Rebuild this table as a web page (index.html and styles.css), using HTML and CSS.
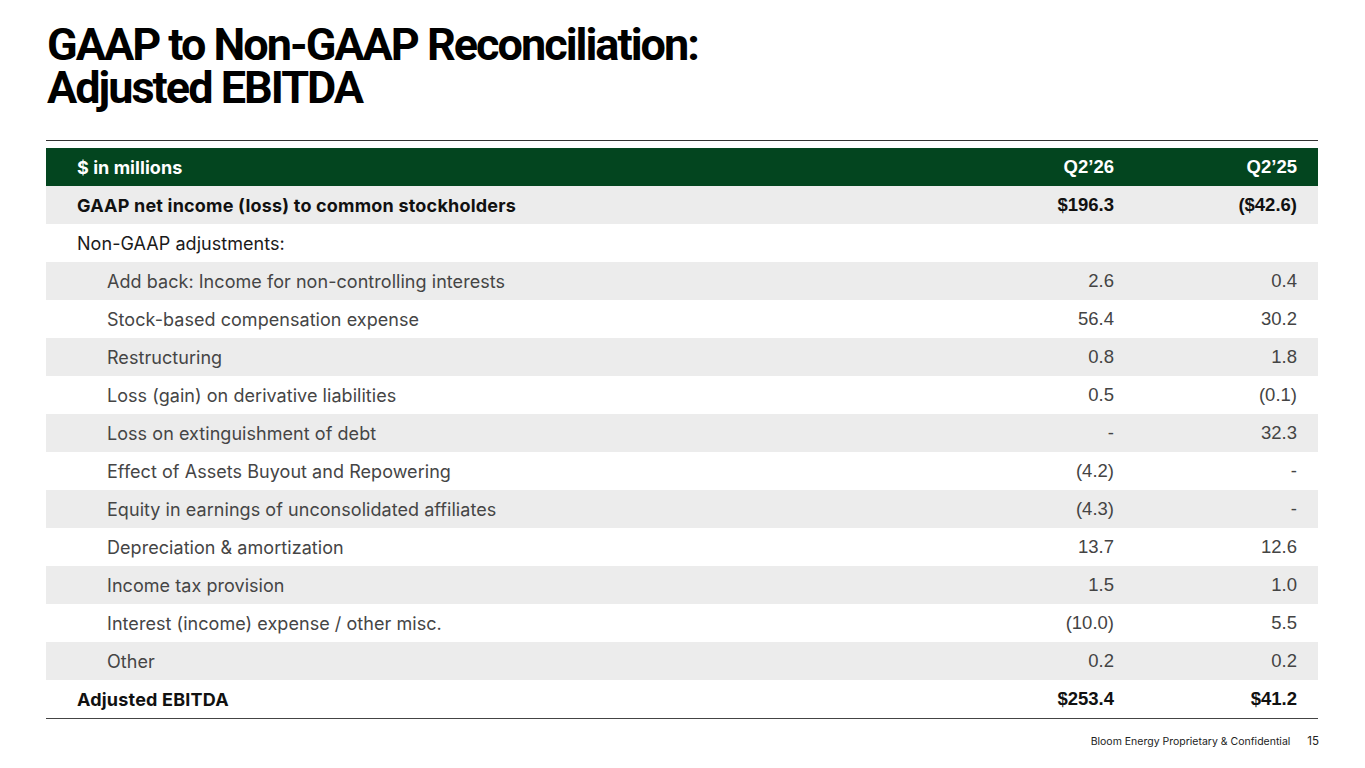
FILE: index.html
```html
<!DOCTYPE html>
<html lang="en">
<head>
<meta charset="utf-8">
<title>GAAP to Non-GAAP Reconciliation: Adjusted EBITDA</title>
<link rel="stylesheet" href="styles.css">
</head>
<body>
<div class="slide">
  <h1 class="title"><span class="tline">GAAP to Non-GAAP Reconciliation:</span><span class="tline">Adjusted EBITDA</span></h1>
  <div class="table-wrap">
    <div class="table">
      <div class="row head">
        <div class="label">$ in millions</div>
        <div class="num">Q2’26</div>
        <div class="num">Q2’25</div>
      </div>
      <div class="row shade strong">
        <div class="label">GAAP net income (loss) to common stockholders</div>
        <div class="num">$196.3</div>
        <div class="num">($42.6)</div>
      </div>
      <div class="row section">
        <div class="label">Non-GAAP adjustments:</div>
        <div class="num"></div>
        <div class="num"></div>
      </div>
      <div class="row shade">
        <div class="label indent">Add back: Income for non-controlling interests</div>
        <div class="num">2.6</div>
        <div class="num">0.4</div>
      </div>
      <div class="row">
        <div class="label indent">Stock-based compensation expense</div>
        <div class="num">56.4</div>
        <div class="num">30.2</div>
      </div>
      <div class="row shade">
        <div class="label indent">Restructuring</div>
        <div class="num">0.8</div>
        <div class="num">1.8</div>
      </div>
      <div class="row">
        <div class="label indent">Loss (gain) on derivative liabilities</div>
        <div class="num">0.5</div>
        <div class="num">(0.1)</div>
      </div>
      <div class="row shade">
        <div class="label indent">Loss on extinguishment of debt</div>
        <div class="num">-</div>
        <div class="num">32.3</div>
      </div>
      <div class="row">
        <div class="label indent">Effect of Assets Buyout and Repowering</div>
        <div class="num">(4.2)</div>
        <div class="num">-</div>
      </div>
      <div class="row shade">
        <div class="label indent">Equity in earnings of unconsolidated affiliates</div>
        <div class="num">(4.3)</div>
        <div class="num">-</div>
      </div>
      <div class="row">
        <div class="label indent">Depreciation &amp; amortization</div>
        <div class="num">13.7</div>
        <div class="num">12.6</div>
      </div>
      <div class="row shade">
        <div class="label indent">Income tax provision</div>
        <div class="num">1.5</div>
        <div class="num">1.0</div>
      </div>
      <div class="row">
        <div class="label indent">Interest (income) expense / other misc.</div>
        <div class="num">(10.0)</div>
        <div class="num">5.5</div>
      </div>
      <div class="row shade">
        <div class="label indent">Other</div>
        <div class="num">0.2</div>
        <div class="num">0.2</div>
      </div>
      <div class="row strong total">
        <div class="label">Adjusted EBITDA</div>
        <div class="num">$253.4</div>
        <div class="num">$41.2</div>
      </div>
    </div>
  </div>
  <div class="footer">
    <span class="conf">Bloom Energy Proprietary &amp; Confidential</span>
    <span class="page">15</span>
  </div>
</div>
</body>
</html>
```
FILE: styles.css
```css
html, body {
  margin: 0;
  padding: 0;
  background: #ffffff;
}
.slide {
  width: 1365px;
  height: 768px;
  overflow: hidden;
  display: flex;
  flex-direction: column;
  font-family: Inter, "Noto Sans", sans-serif;
}
.title {
  margin: 0;
  padding: 22px 0 0 47px;
  font-family: Roboto, Inter, sans-serif;
  font-weight: 700;
  font-size: 45px;
  letter-spacing: -2px;
  color: #000000;
}
.tline {
  display: block;
  height: 43px;
  line-height: 46px;
}
.tline + .tline {
  height: 41px;
}
.table-wrap {
  margin: 34px 47px 0 46px;
}
.table {
  border-top: 1px solid #333333;
  padding-top: 7px;
  border-bottom: 1px solid #444444;
}
.row {
  display: grid;
  grid-template-columns: 1fr 183px 183px;
  height: 38px;
  align-items: center;
  background: #ffffff;
}
.row.shade {
  background: #ececec;
}
.row.head {
  background: #03451f;
  color: #ffffff;
  font-weight: 700;
}
.label {
  padding-left: 31px;
  font-size: 18px;
  letter-spacing: 0.05px;
  color: #1a1a1a;
}
.label.indent {
  padding-left: 61px;
  color: #454545;
}
.strong .label {
  letter-spacing: 0.2px;
}
.num {
  text-align: right;
  padding-right: 21px;
  font-family: "Liberation Sans", Arial, sans-serif;
  font-size: 18.5px;
  color: #444444;
}
.head .label, .head .num {
  color: #ffffff;
  font-weight: 700;
}
.strong .label, .strong .num {
  font-weight: 700;
  color: #111111;
}
.footer {
  display: flex;
  justify-content: flex-end;
  align-items: center;
  gap: 17px;
  padding: 15px 46px 0 0;
}
.conf {
  font-size: 10.5px;
  color: #222222;
}
.page {
  font-size: 11.5px;
  color: #222222;
}
```
